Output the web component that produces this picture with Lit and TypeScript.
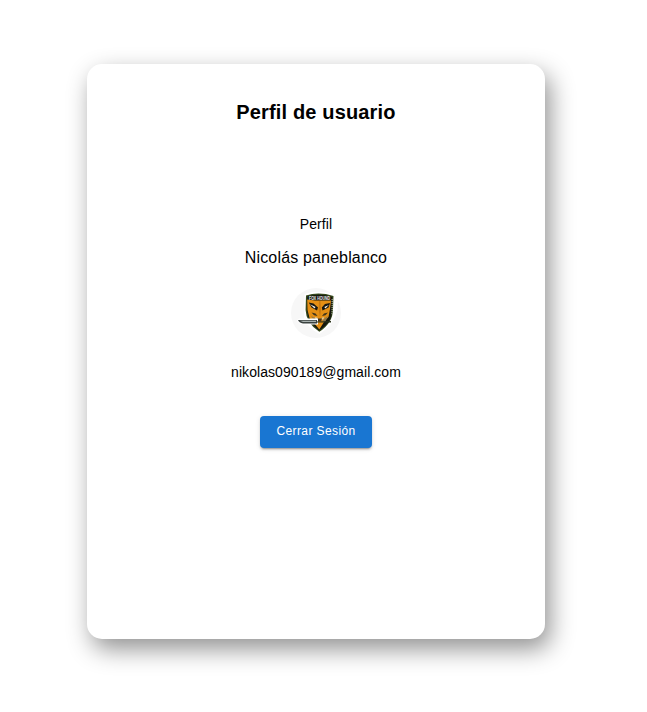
import { LitElement, html, css, svg } from "lit";
import { customElement } from "lit/decorators.js";

const emblem = svg`
  <path d="M13.5 6Q28 1.5 47 6.5L46.5 22Q43 37 28.5 46Q17 40 13 31Z" fill="#fff"/>
  <path d="M15 7.4Q28 3.4 42.5 8L42 21Q42 35 28.3 43.8Q15 35 14.6 22Z" fill="#34471b"/>
  <path d="M16.4 8.4Q28 5 41.2 9L40.8 21Q40.5 34 28.3 42.6Q16.5 34 16 22Z" fill="#15170f"/>
  <path d="M16.2 11.5L24 12.5H32L40 12.5L39 21L37.5 29L33 34L28.3 41.5L23 35L18.5 30L16.5 22Z" fill="#e58f14"/>
  <path d="M17.8 14.5L22.5 15.5L27 19.5L26 22.5L20.5 19.5Z" fill="#171711"/>
  <path d="M19 16.2L24.5 19L23.5 20.5Z" fill="#faf7ec"/>
  <path d="M39 15L34 16L30.8 19.5L31.5 22.5L37.5 19.5Z" fill="#171711"/>
  <path d="M37.8 17L33.4 19L34.4 20.5Z" fill="#faf7ec"/>
  <path d="M28 13L27.7 22L29 29L30 22L29.4 13Z" fill="#c87910"/>
  <path d="M20.5 24.5L24.5 25.5L26.5 28L23 27.2ZM37 24.5L33 25.5L31 28L34.5 27.2Z" fill="#40351c"/>
  <path d="M20 28L24 30L27 33L24 34ZM37 28L34 30L31 33L34 34Z" fill="#8c7750"/>
  <path d="M24 29L26.5 29.8L27 32L24.5 31ZM33 29L30.8 29.8L30.3 32L32.6 31Z" fill="#d7c8a5"/>
  <path d="M26.3 30.5H31L30.2 33.4H27.2Z" fill="#46351d"/>
  <path d="M40.8 26L38 29L34.5 34L29 41.5Q39 36 40.8 26Z" fill="#15180f"/>
  <path d="M5.8 32.2L8 30.6H27V36.6H12Q7 35.5 5.8 32.2Z" fill="#fff"/>
  <path d="M7 32H26V35.5H12Q8 34.5 7 32Z" fill="#3b4240"/>
  <path d="M9 32.7H25V34H12Z" fill="#a6afad"/>
  <path d="M26 33.5L40 33V34.5H26Z" fill="#293018"/>
  <path d="M41.2 11V26" stroke="#9a9d90" stroke-width="1.4" stroke-dasharray="1 1"/>
`;

@customElement("app-root")
export class AppRoot extends LitElement {
  static styles = css`
    :host {
      display: flex;
      box-sizing: border-box;
      height: 712px;
      padding: 64px 102px 73px 87px;
      overflow: hidden;
      background: #fff;
      color: #000;
      font-family: "Liberation Sans", Arial, sans-serif;
    }
    .card {
      box-sizing: border-box;
      flex: 1;
      display: flex;
      flex-direction: column;
      align-items: center;
      padding-top: 32px;
      border-radius: 15px;
      background: #fff;
      box-shadow: 5px 10px 24px rgba(0, 0, 0, 0.43);
    }
    h1, p { margin: 0; }
    h1 {
      font-size: 20px;
      font-weight: 700;
      line-height: 32px;
      letter-spacing: 0.0075em;
    }
    .label {
      margin-top: 86px;
      font-size: 14px;
      line-height: 20px;
      letter-spacing: 0.07px;
    }
    .name {
      margin-top: 12px;
      font-size: 16px;
      line-height: 24px;
      letter-spacing: 0.00938em;
    }
    .avatar {
      width: 50px;
      height: 50px;
      margin-top: 18px;
      border-radius: 50%;
      background: #f7f7f7;
      overflow: hidden;
    }
    .avatar svg { display: block; }
    .email {
      margin-top: 24px;
      font-size: 14px;
      line-height: 20px;
      letter-spacing: 0.07px;
    }
    button {
      box-sizing: border-box;
      width: 112px;
      height: 32px;
      margin-top: 34px;
      padding: 0 0 2px;
      border: 0;
      border-radius: 4px;
      background: #1976d2;
      color: #fff;
      font: 12px/20px "Liberation Sans", Arial, sans-serif;
      letter-spacing: 0.4px;
      box-shadow: 0 3px 1px -2px rgba(0, 0, 0, 0.2),
        0 2px 2px 0 rgba(0, 0, 0, 0.14), 0 1px 5px 0 rgba(0, 0, 0, 0.12);
    }
  `;

  render() {
    return html`
      <main class="card">
        <h1>Perfil de usuario</h1>
        <p class="label">Perfil</p>
        <p class="name">Nicolás paneblanco</p>
        <div class="avatar">
          <svg width="50" height="50" viewBox="0 0 50 50" fill="none" aria-hidden="true">
            ${emblem}
            <text x="18" y="11.6" textLength="21" lengthAdjust="spacingAndGlyphs" font-size="5" font-weight="700" fill="#eee">FOX HOUND</text>
          </svg>
        </div>
        <p class="email">nikolas090189@gmail.com</p>
        <button type="button">Cerrar Sesión</button>
      </main>
    `;
  }
}
